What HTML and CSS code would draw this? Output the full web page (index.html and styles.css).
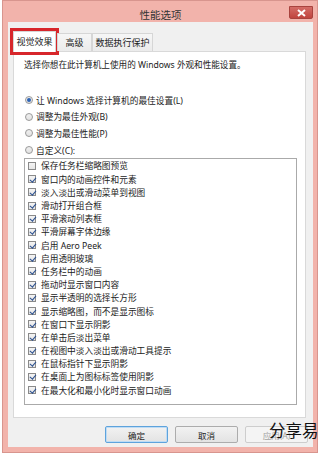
FILE: index.html
```html
<!DOCTYPE html>
<html lang="zh-CN">
<head>
  <meta charset="UTF-8" />
  <meta name="viewport" content="width=device-width,initial-scale=1.0" />
  <title>性能选项</title>
  <link rel="stylesheet" href="styles.css">
</head>
<body>
  <div class="window">
    <div class="titlebar">
      <span></span>
      <span class="title">性能选项</span>
      <button class="close" aria-label="关闭">
        <svg width="9" height="8" viewBox="0 0 9 8"><path d="M1 1L8 7M8 1L1 7" stroke="#fff" stroke-width="2"/></svg>
      </button>
    </div>

    <div class="client">
      <div class="tabs">
        <div class="tab active">视觉效果</div>
        <div class="tab">高级</div>
        <div class="tab">数据执行保护</div>
      </div>

      <div class="panel">
        <p class="intro">选择你想在此计算机上使用的 Windows 外观和性能设置。</p>

        <div class="radios">
          <label class="radio on"><span class="dot"></span>让 Windows 选择计算机的最佳设置(L)</label>
          <label class="radio"><span class="dot"></span>调整为最佳外观(B)</label>
          <label class="radio"><span class="dot"></span>调整为最佳性能(P)</label>
          <label class="radio"><span class="dot"></span>自定义(C):</label>
        </div>

        <ul class="list">
          <li><span class="box"></span>保存任务栏缩略图预览</li>
          <li class="on"><span class="box"></span>窗口内的动画控件和元素</li>
          <li class="on"><span class="box"></span>淡入淡出或滑动菜单到视图</li>
          <li class="on"><span class="box"></span>滑动打开组合框</li>
          <li class="on"><span class="box"></span>平滑滚动列表框</li>
          <li class="on"><span class="box"></span>平滑屏幕字体边缘</li>
          <li class="on"><span class="box"></span>启用 Aero Peek</li>
          <li class="on"><span class="box"></span>启用透明玻璃</li>
          <li class="on"><span class="box"></span>任务栏中的动画</li>
          <li class="on"><span class="box"></span>拖动时显示窗口内容</li>
          <li class="on"><span class="box"></span>显示半透明的选择长方形</li>
          <li class="on"><span class="box"></span>显示缩略图，而不是显示图标</li>
          <li class="on"><span class="box"></span>在窗口下显示阴影</li>
          <li class="on"><span class="box"></span>在单击后淡出菜单</li>
          <li class="on"><span class="box"></span>在视图中淡入淡出或滑动工具提示</li>
          <li class="on"><span class="box"></span>在鼠标指针下显示阴影</li>
          <li class="on"><span class="box"></span>在桌面上为图标标签使用阴影</li>
          <li class="on"><span class="box"></span>在最大化和最小化时显示窗口动画</li>
        </ul>
      </div>

      <div class="buttons">
        <button class="btn default">确定</button>
        <button class="btn">取消</button>
        <button class="btn" disabled>应用(A)</button>
      </div>
    </div>

    <div class="watermark">分享易</div>
  </div>
</body>
</html>
```

FILE: styles.css
```css
*{box-sizing:border-box;}
body{
  margin:0;background:#fff;
  font-family:"Noto Sans","Noto Sans CJK SC",sans-serif;color:#222;
}
.window{
  position:relative;width:316px;height:453px;margin-left:2px;
  background:#f2b3ab;border:1px solid #d8958e;
  padding:0 4px 5px 5px;display:flex;flex-direction:column;
}
.titlebar{
  height:21px;display:grid;grid-template-columns:1fr auto 1fr;align-items:start;
}
.title{padding-top:7px;font-size:10.5px;line-height:14px;color:#333;}
.close{
  justify-self:end;margin-top:5px;width:24px;height:13px;padding:0;
  display:flex;align-items:center;justify-content:center;
  background:linear-gradient(#d46c66,#c0443e);border:1px solid #a8433e;border-radius:0 0 2px 2px;
}
.client{
  flex:1;background:#f0f0f0;padding:0 7px 0 5px;
  display:flex;flex-direction:column;
}

/* tabs */
.tabs{display:flex;align-items:flex-end;height:30px;margin-bottom:-1px;position:relative;z-index:1;}
.tab{
  height:18px;margin-bottom:1px;border:1px solid #d6d6d6;border-bottom:none;
  background:linear-gradient(#f6f6f6,#ebebeb);white-space:nowrap;
  font-size:9px;line-height:17px;text-align:center;padding:0;
}
.tab.active{
  width:43px;height:21px;margin-bottom:0;background:#fff;line-height:20px;
  outline:3px solid #d7262b;
}
.tab:nth-child(2){width:35px;margin-left:1px;}
.tab:nth-child(3){width:61px;}

/* panel */
.panel{
  background:#fff;border:1px solid #d9d9d9;height:367px;
  padding:7px 8px 0 10px;
}
.intro{margin:0;font-size:8.6px;line-height:12px;}
.radios{margin-top:21px;display:flex;flex-direction:column;}
.radio{display:flex;align-items:center;height:16.6px;font-size:8.7px;}
.dot{
  width:8px;height:8px;margin:0 3px 0 1px;border-radius:50%;
  border:1px solid #9a9a9a;background:linear-gradient(#f0f0f0,#e2e2e2);
  display:flex;align-items:center;justify-content:center;
}
.radio.on .dot::after{
  content:"";width:4px;height:4px;border-radius:50%;background:#2d64b5;
}

.list{
  list-style:none;margin:0;padding:0 0 0 3px;height:247px;
  border:1px solid #aaaaaa;background:#fff;
}
.list li{display:flex;align-items:center;height:13.2px;font-size:8.7px;}
.box{
  width:8px;height:8px;margin-right:5px;border:1px solid #8a8a8a;
  background:linear-gradient(#f4f4f4,#e6e6e6);position:relative;
}
.list li.on .box::after{
  content:"";position:absolute;left:1.5px;top:-0.5px;width:2.5px;height:5px;
  border:solid #2a4f8f;border-width:0 1.5px 1.5px 0;transform:rotate(40deg);
}

/* buttons */
.buttons{display:flex;justify-content:flex-end;gap:7px;margin:8px -2px 0 0;}
.btn{
  width:63px;height:17px;padding:0;font-family:inherit;font-size:8.5px;color:#222;
  border:1px solid #acacac;border-radius:2px;background:linear-gradient(#f2f2f2,#e3e3e3);
}
.btn.default{border-color:#5ea3dc;box-shadow:inset 0 0 0 1px #bfdcf5;}
.btn:disabled{color:#a3a3a3;border-color:#cdcdcd;background:#f4f4f4;}

.watermark{
  position:absolute;left:266px;top:420px;font-size:16.5px;line-height:18px;color:#111;
  font-family:"Noto Sans CJK SC",sans-serif;white-space:nowrap;
}
```
